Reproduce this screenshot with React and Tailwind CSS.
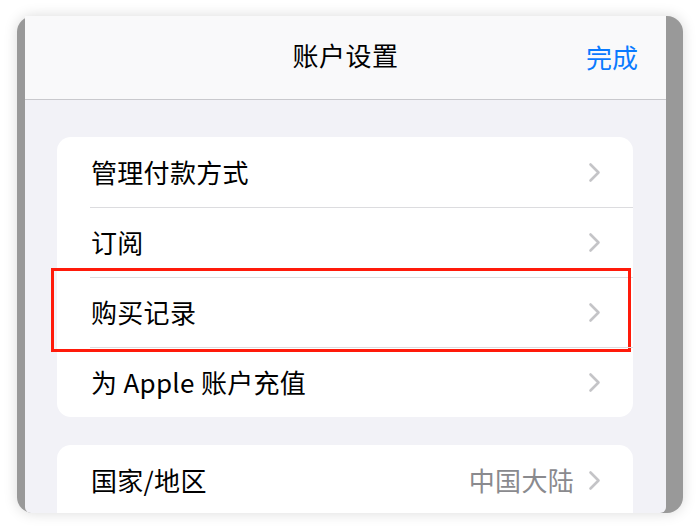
import React from 'react';

// chevron used on the right of each row
function Chevron() {
  return (
    <svg width="13" height="21" viewBox="0 0 13 21" fill="none" className="shrink-0">
      <polyline points="2.5,2.5 10.5,10.5 2.5,18.5" stroke="#c4c4c7" strokeWidth="2.6" strokeLinecap="round" strokeLinejoin="round" />
    </svg>
  );
}

function Row({ label, value, divider, highlight }) {
  return (
    <div className="relative h-[70px] flex items-center pl-[34px] pr-[32px]">
      {divider && <div className="absolute top-0 left-[33px] right-0 h-px bg-[#dcdcdf]" />}
      <span className="flex-1 text-[26px] text-black leading-none tracking-[0.3px]">{label}</span>
      {value && <span className="mr-[14px] text-[26px] text-[#8a8a8e] leading-none tracking-[0.3px]">{value}</span>}
      <Chevron />
      {highlight && (
        <div className="absolute left-[-6px] right-[2px] top-[-9px] bottom-[-5px] border-[3px] border-[#ff1a0a]" />
      )}
    </div>
  );
}

export default function App() {
  const rows = [
    { label: '管理付款方式' },
    { label: '订阅' },
    { label: '购买记录', highlight: true },
    { label: '为 Apple 账户充值' },
  ];

  return (
    <div
      className="w-[700px] h-[530px] bg-white pt-[16px] pl-[17px] overflow-hidden"
      style={{ fontFamily: '"Noto Sans CJK SC", "Noto Sans", sans-serif' }}
    >
      {/* gray device frame behind the sheet */}
      <div className="w-[666px] h-[497px] rounded-[16px] bg-[#999999] shadow-[0_0_14px_rgba(0,0,0,0.15)]">
        <div className="ml-[8px] w-[641px] h-full bg-[#f2f2f7] overflow-hidden rounded-b-[6px]">
          {/* header */}
          <div className="h-[84px] bg-[#f9f9fa] border-b border-[#c9c9cd] flex items-center justify-center relative pb-[6px]">
            <span className="text-[26px] text-black tracking-[0.5px]">账户设置</span>
            <span className="absolute right-[28px] top-[21px] text-[26px] text-[#0a7aff]">完成</span>
          </div>

          {/* first group */}
          <div className="mt-[37px] ml-[32px] w-[576px] bg-white rounded-[14px]">
            {rows.map((r, i) => (
              <Row key={i} label={r.label} divider={i > 0} highlight={r.highlight} />
            ))}
          </div>

          {/* second group */}
          <div className="mt-[28px] ml-[32px] w-[576px] bg-white rounded-t-[14px]">
            <Row label="国家/地区" value="中国大陆" />
          </div>
        </div>
      </div>
    </div>
  );
}
